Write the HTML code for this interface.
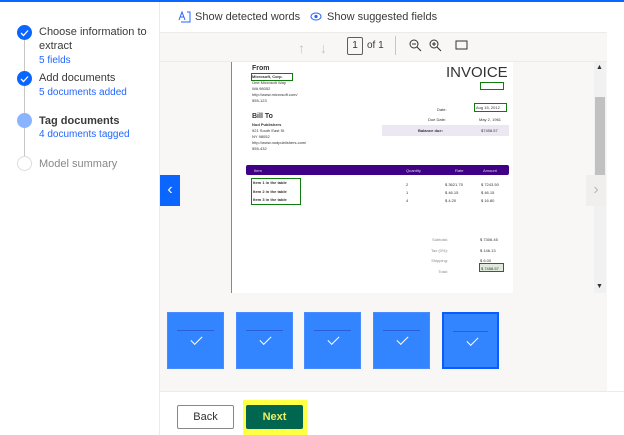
<!DOCTYPE html>
<html><head><meta charset="utf-8"><style>
*{margin:0;padding:0;box-sizing:border-box}
body{width:624px;height:435px;position:relative;overflow:hidden;background:#fff;font-family:"Liberation Sans",sans-serif;color:#323130}
.a{position:absolute}
.t{font-size:11px;white-space:nowrap;color:#3b3a39}
.s{font-size:10px;color:#2266ff}
.c{position:absolute;left:17px;width:15px;height:15px;border-radius:50%}
.p{position:absolute;font-size:4px;white-space:nowrap;color:#333}
.g{position:absolute;border:1.3px solid #107c10}
.th{position:absolute;top:312px;width:57px;height:57px;background:#3385ff;border:1px solid #4a8cff}
.th:after{content:"";position:absolute;left:23px;top:23px;width:10px;height:5px;border-left:1.5px solid #fff;border-bottom:1.5px solid #fff;transform:rotate(-45deg)}
.th i{position:absolute;left:9px;right:9px;top:17px;height:1px;background:#2a5fd8}
</style></head><body>
<div class="a" style="left:0;top:0;width:624px;height:2px;background:#0a66ff"></div>
<div class="a" style="left:159px;top:2px;width:1px;height:433px;background:#edebe9"></div>
<div class="a" style="left:24px;top:40px;width:1px;height:120px;background:#c8c6c4"></div>
<div class="c" style="top:25px;background:#0a66ff"></div>
<div class="c" style="top:71px;background:#0a66ff"></div>
<svg class="a" style="left:20px;top:29px" width="9" height="8"><path d="M1 4l2.5 2.5L8 1.5" stroke="#fff" stroke-width="1.3" fill="none"/></svg>
<svg class="a" style="left:20px;top:75px" width="9" height="8"><path d="M1 4l2.5 2.5L8 1.5" stroke="#fff" stroke-width="1.3" fill="none"/></svg>
<div class="c" style="top:113px;background:#8ab4ff"></div>
<div class="c" style="top:156px;background:#fff;border:1px solid #dcdcdc"></div>
<div class="a t" style="left:39px;top:26px">Choose information to</div>
<div class="a t" style="left:39px;top:40px">extract</div>
<div class="a s" style="left:39px;top:55px">5 fields</div>
<div class="a t" style="left:39px;top:72px">Add documents</div>
<div class="a s" style="left:39px;top:87px">5 documents added</div>
<div class="a t" style="left:39px;top:115px;font-weight:bold">Tag documents</div>
<div class="a s" style="left:39px;top:129px">4 documents tagged</div>
<div class="a t" style="left:39px;top:158px;color:#8a8886">Model summary</div>
<svg class="a" style="left:178px;top:11px" width="13" height="12"><path d="M1 9L4 1l3 8M2 6h4M9 1h3v10H3" stroke="#2266ff" fill="none"/></svg>
<div class="a t" style="left:195px;top:11px">Show detected words</div>
<svg class="a" style="left:310px;top:12px" width="12" height="9"><ellipse cx="6" cy="4.5" rx="5" ry="3.5" stroke="#2266ff" fill="none"/><circle cx="6" cy="4.5" r="1.6" fill="#2266ff"/></svg>
<div class="a t" style="left:327px;top:11px">Show suggested fields</div>
<div class="a" style="left:160px;top:32px;width:447px;height:360px;background:#f8f7f6;border-top:1px solid #edebe9"></div>
<div class="a" style="left:160px;top:391px;width:464px;height:1px;background:#edebe9"></div>
<div class="a" style="left:160px;top:61px;width:447px;height:1px;background:#edebe9"></div>
<div class="a" style="left:298px;top:40px;font-size:14px;color:#c8c6c4">↑</div>
<div class="a" style="left:320px;top:40px;font-size:14px;color:#c8c6c4">↓</div>
<div class="a" style="left:347px;top:37px;width:16px;height:18px;border:1px solid #605e5c;border-radius:2px;font-size:10px;text-align:center;line-height:16px">1</div>
<div class="a t" style="left:367px;top:40px;font-size:10px">of 1</div>
<div class="a" style="left:395px;top:36px;width:1px;height:19px;background:#c8c6c4"></div>
<svg class="a" style="left:409px;top:39px" width="60" height="14"><g stroke="#323130" fill="none"><circle cx="5" cy="5" r="4"/><path d="M8 8l4 4M3 5h4"/><circle cx="25" cy="5" r="4"/><path d="M28 8l4 4M23 5h4M25 3v4"/><rect x="47" y="2" width="11" height="8"/></g></svg>
<div class="a" style="left:231px;top:62px;width:282px;height:231px;background:#fff;border-left:1px solid #8a8886"></div>
<div class="p" style="left:252px;top:65px;font-size:7px;font-weight:bold">From</div>
<div class="p" style="left:252px;top:74px;font-weight:bold">Microsoft, Corp.</div>
<div class="p" style="left:252px;top:80px">One Microsoft Way</div>
<div class="p" style="left:252px;top:86px">WA 98052</div>
<div class="p" style="left:252px;top:92px">http://www.microsoft.com/</div>
<div class="p" style="left:252px;top:98px">555-123</div>
<div class="g" style="left:251px;top:73px;width:42px;height:8px"></div>
<div class="p" style="left:252px;top:113px;font-size:7px;font-weight:bold">Bill To</div>
<div class="p" style="left:252px;top:122px;font-weight:bold">Nod Publishers</div>
<div class="p" style="left:252px;top:128px">921 South East St</div>
<div class="p" style="left:252px;top:134px">NY 98052</div>
<div class="p" style="left:252px;top:140px">http://www.nodpublishers.com/</div>
<div class="p" style="left:252px;top:146px">555-432</div>
<div class="p" style="left:446px;top:64px;font-size:15px">INVOICE</div>
<div class="g" style="left:480px;top:82px;width:24px;height:8px"></div>
<div class="p" style="left:437px;top:107px">Date:</div>
<div class="g" style="left:474px;top:103px;width:33px;height:9px"></div>
<div class="p" style="left:476px;top:105px">Aug 15, 2012</div>
<div class="p" style="left:428px;top:117px">Due Date:</div>
<div class="p" style="left:479px;top:117px">May 2, 1961</div>
<div class="a" style="left:382px;top:125px;width:127px;height:11px;background:#ece8f3"></div>
<div class="p" style="left:418px;top:128px;font-weight:bold">Balance due:</div>
<div class="p" style="left:481px;top:128px">$7458.57</div>
<div class="a" style="left:246px;top:165px;width:263px;height:10px;background:#3f0085;border-radius:2px"></div>
<div class="p" style="left:254px;top:168px;color:#ddd">Item</div>
<div class="p" style="left:406px;top:168px;color:#ddd">Quantity</div>
<div class="p" style="left:455px;top:168px;color:#ddd">Rate</div>
<div class="p" style="left:483px;top:168px;color:#ddd">Amount</div>
<div class="g" style="left:251px;top:178px;width:50px;height:27px"></div>
<div class="p" style="left:253px;top:180px;font-weight:bold">Item 1 in the table</div>
<div class="p" style="left:253px;top:189px;font-weight:bold">Item 2 in the table</div>
<div class="p" style="left:253px;top:197px;font-weight:bold">Item 3 in the table</div>
<div class="p" style="left:406px;top:181px;line-height:8px">2<br>1<br>4</div>
<div class="p" style="left:445px;top:181px;line-height:8px">$ 3621.75<br>$ 46.15<br>$ 4.20</div>
<div class="p" style="left:481px;top:181px;line-height:8px">$ 7243.50<br>$ 46.15<br>$ 16.80</div>
<div class="p" style="left:431px;top:235px;color:#888;line-height:10.5px;text-align:right">Subtotal:<br>Tax (0%):<br>Shipping:<br>Total:</div>
<div class="p" style="left:480px;top:235px;line-height:10.5px">$ 7306.45<br>$ 146.13<br>$ 6.00</div>
<div class="g" style="left:479px;top:263px;width:25px;height:9px;background:#dfe9dc"></div>
<div class="p" style="left:481px;top:266px">$ 7458.57</div>
<div class="a" style="left:594px;top:62px;width:12px;height:231px;background:#f1f1f1"></div>
<div class="a" style="left:595px;top:97px;width:10px;height:78px;background:#c1c1c1"></div>
<div class="a" style="left:596px;top:64px;font-size:7px">▲</div>
<div class="a" style="left:596px;top:283px;font-size:7px">▼</div>
<div class="a" style="left:160px;top:175px;width:20px;height:31px;background:#0a66ff;color:#fff;font-size:16px;text-align:center;line-height:30px">‹</div>
<div class="a" style="left:586px;top:175px;width:20px;height:31px;background:#f0efee;color:#bbb;font-size:16px;text-align:center;line-height:30px">›</div>
<div class="th" style="left:167px"><i></i></div>
<div class="th" style="left:236px"><i></i></div>
<div class="th" style="left:304px"><i></i></div>
<div class="th" style="left:373px"><i></i></div>
<div class="th" style="left:442px;border:2px solid #0a5cff"><i></i></div>
<div class="a" style="left:177px;top:405px;width:57px;height:24px;border:1px solid #8a8886;border-radius:2px;font-size:11px;text-align:center;line-height:22px">Back</div>
<div class="a" style="left:243px;top:400px;width:64px;height:35px;background:#ffff44"></div>
<div class="a" style="left:246px;top:405px;width:57px;height:24px;background:#006650;border-radius:2px;font-size:11px;font-weight:bold;color:#f0f060;text-align:center;line-height:24px">Next</div>
</body></html>
